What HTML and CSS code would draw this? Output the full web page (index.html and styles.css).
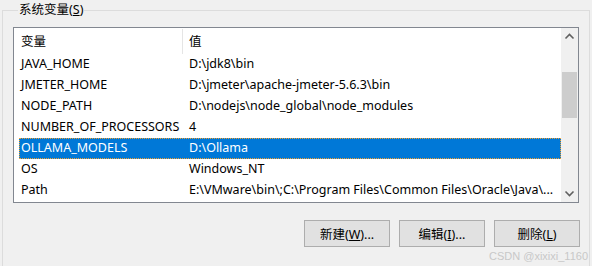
FILE: index.html
```
<!doctype html>
<html lang="zh-CN">
<head>
<meta charset="utf-8">
<title>系统变量</title>
<link rel="stylesheet" href="styles.css">
</head>
<body>

<fieldset class="group">
  <legend>系统变量(<u>S</u>)</legend>

  <div class="listbox">
    <div class="list">
      <div class="head">
        <span class="col-name">变量</span>
        <span class="col-val">值</span>
      </div>
      <div class="row"><span class="col-name">JAVA_HOME</span><span class="col-val">D:\jdk8\bin</span></div>
      <div class="row"><span class="col-name">JMETER_HOME</span><span class="col-val">D:\jmeter\apache-jmeter-5.6.3\bin</span></div>
      <div class="row"><span class="col-name">NODE_PATH</span><span class="col-val">D:\nodejs\node_global\node_modules</span></div>
      <div class="row"><span class="col-name">NUMBER_OF_PROCESSORS</span><span class="col-val">4</span></div>
      <div class="row sel"><span class="col-name">OLLAMA_MODELS</span><span class="col-val">D:\Ollama</span></div>
      <div class="row"><span class="col-name">OS</span><span class="col-val">Windows_NT</span></div>
      <div class="row"><span class="col-name">Path</span><span class="col-val">E:\VMware\bin\;C:\Program Files\Common Files\Oracle\Java\...</span></div>
    </div>

    <div class="vscroll">
      <svg class="arrow" width="17" height="17" viewBox="0 0 17 17"><polyline points="4.5,10.5 8.5,6.5 12.5,10.5" fill="none" stroke="#606060" stroke-width="1.6"/></svg>
      <div class="track"><div class="thumb"></div></div>
      <svg class="arrow" width="17" height="17" viewBox="0 0 17 17"><polyline points="4.5,6.5 8.5,10.5 12.5,6.5" fill="none" stroke="#606060" stroke-width="1.6"/></svg>
    </div>
  </div>

  <div class="actions">
    <button>新建(<u>W</u>)...</button>
    <button>编辑(<u>I</u>)...</button>
    <button>删除(<u>L</u>)</button>
  </div>
</fieldset>

<div class="mark">CSDN @xixixi_1160</div>

</body>
</html>
```

FILE: styles.css
```
*{box-sizing:border-box}
body{
  margin:0;width:592px;height:266px;overflow:hidden;position:relative;
  background:#f0f0f0;color:#000;
  font:12.5px/1 "Noto Sans","Noto Sans CJK SC",sans-serif;
}

.group{
  margin:3px 2px 0 2px;padding:8px 10px 0 10px;height:263px;
  border:1px solid #dcdcdc;border-bottom:0;
}
.group legend{padding:0 1px;margin-left:5px;font-size:12.5px;line-height:14px}

.listbox{
  display:flex;height:176px;margin-top:2px;
  border:1px solid #828790;background:#fff;
}
.list{flex:1;padding-top:1px}
.head,.row{display:flex;align-items:center}
.head{height:25px}
.head .col-name{border-right:1px solid #e5e5e5;height:25px;display:flex;align-items:center;padding-top:2px}
.head .col-val{padding-top:2px}
.row{height:21px;margin-left:5px}
.col-name{width:169px;padding-left:7px;white-space:nowrap}
.row .col-name{width:164px;padding-left:2px}
.col-val{padding-left:6px;white-space:nowrap}
.row.sel{background:#0078d7;color:#fff;outline:1px dotted #f0a030;outline-offset:-1px}

.vscroll{width:17px;background:#f0f0f0;display:flex;flex-direction:column}
.arrow{display:block}
.track{flex:1;padding-top:27px}
.thumb{height:46px;margin:0 1px;background:#cdcdcd}

.actions{display:flex;justify-content:flex-end;gap:9px;margin-top:17px;margin-right:-1px}
.actions button{
  width:86px;height:27px;border:1px solid #adadad;background:#e1e1e1;
  font:12.5px "Noto Sans","Noto Sans CJK SC",sans-serif;color:#000;padding:0;
}

.mark{position:absolute;right:4px;bottom:4px;color:#c8c8c8;font:11px "Liberation Sans",sans-serif}
```
